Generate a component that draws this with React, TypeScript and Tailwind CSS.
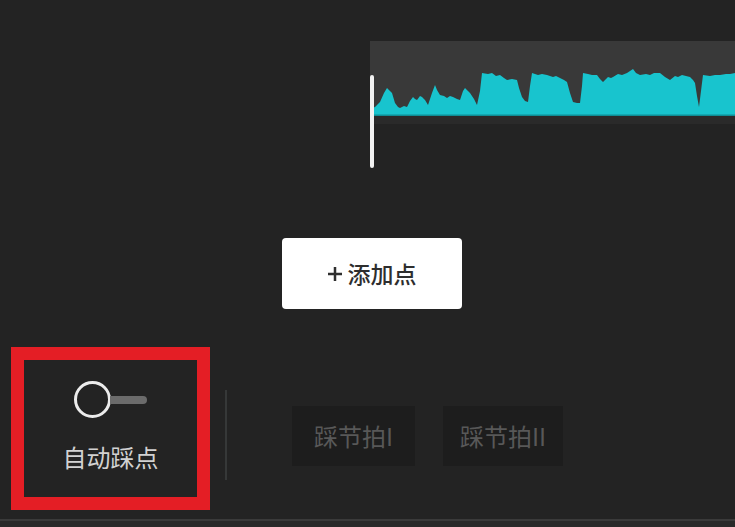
import React from "react";

const pts: [number, number][] = [
  [0, 68], [5, 66], [8, 63], [10, 61], [14, 52], [17, 47], [20, 50], [22, 52], [25, 62], [28, 66], [30, 67],
  [34, 65], [37, 66], [40, 60], [43, 56], [45, 58], [47, 59], [50, 55], [52, 56], [55, 59], [58, 64],
  [62, 52], [65, 44], [67, 49], [70, 54], [74, 55], [77, 57], [80, 55], [83, 56], [87, 58], [90, 59],
  [93, 50], [95, 47], [98, 50], [100, 52], [104, 58], [107, 64], [110, 50], [112, 32], [118, 33], [122, 32],
  [126, 35], [130, 34], [134, 37], [137, 39], [142, 38], [147, 39], [149, 47], [152, 56], [155, 60], [158, 61],
  [160, 45], [162, 32], [168, 34], [172, 33], [177, 34], [183, 36], [186, 35], [190, 37], [194, 39], [197, 41],
  [200, 52], [203, 61], [207, 62], [210, 62], [212, 45], [213, 32], [218, 33], [222, 34], [227, 34], [230, 38],
  [233, 41], [238, 36], [241, 37], [243, 36], [248, 33], [252, 34], [257, 32], [260, 30], [263, 28], [266, 32],
  [270, 34], [276, 33], [280, 34], [284, 32], [290, 32], [295, 36], [300, 39], [305, 35], [308, 36], [312, 34],
  [316, 35], [320, 36], [323, 39], [325, 42], [327, 55], [329, 66], [331, 50], [333, 34], [340, 35], [345, 34],
  [350, 34], [356, 33], [360, 33], [365, 32], [365, 74], [0, 74],
];

const d = "M" + pts.map(([x, y]) => `${x} ${y}`).join(" L") + " Z";

function Waveform() {
  return (
    <svg width="365" height="83" viewBox="0 0 365 83" className="block">
      <rect x="0" y="0" width="365" height="74" fill="#393939" />
      <rect x="0" y="74" width="365" height="9" fill="#2a2a2a" />
      <path d={d} fill="#18c4ce" />
      <rect x="0" y="73.5" width="365" height="1.5" fill="#0f8d95" />
    </svg>
  );
}

export default function App() {
  return (
    <div
      className="relative flex h-[527px] w-[735px] flex-col overflow-hidden bg-[#232323]"
      style={{ fontFamily: '"Noto Sans CJK SC", "Noto Sans", sans-serif' }}
    >
      {/* waveform */}
      <div className="pl-[370px] pt-[41px]">
        <Waveform />
      </div>
      {/* playhead overlay */}
      <div className="absolute left-[370px] top-[75px] h-[93px] w-[4px] rounded-[2px] bg-[#f2f2f2]" />

      {/* add point button */}
      <div className="ml-[282px] mt-[114px] flex h-[71px] w-[180px] items-center justify-center rounded-[4px] bg-white text-[23px] font-medium text-[#2e2e2e]">
        <svg width="14" height="14" viewBox="0 0 14 14" className="mr-[6px]">
          <rect x="5.75" y="0" width="2.5" height="14" fill="#2e2e2e" />
          <rect x="0" y="5.75" width="14" height="2.5" fill="#2e2e2e" />
        </svg>
        <span>添加点</span>
      </div>

      {/* bottom row */}
      <div className="mt-[38px] flex items-start">
        <div className="ml-[11px] flex h-[163px] w-[199px] flex-col items-center border-[13px] border-[#e41e25]">
          <div className="mt-[21px] flex items-center">
            <div className="h-[37px] w-[37px] rounded-full border-[3px] border-[#ececec]" />
            <div className="-ml-[1px] h-[8px] w-[37px] rounded-r-full bg-[#6b6b6b]" />
          </div>
          <div className="mt-[25px] text-[24px] leading-[28px] text-[#d2d2d2]">自动踩点</div>
        </div>
        <div className="ml-[15px] mt-[43px] h-[90px] w-[2px] bg-[#363838]" />
        <div className="ml-[65px] mt-[59px] flex h-[60px] w-[123px] items-center justify-center bg-[#1d1d1d] text-[24px] text-[#585858]">
          踩节拍I
        </div>
        <div className="ml-[28px] mt-[59px] flex h-[60px] w-[120px] items-center justify-center bg-[#1d1d1d] text-[24px] text-[#585858]">
          踩节拍II
        </div>
      </div>

      <div className="mt-[9px] h-[2px] bg-[#3a3a3a]" />
      <div className="flex-1 bg-[#292929]" />
    </div>
  );
}
